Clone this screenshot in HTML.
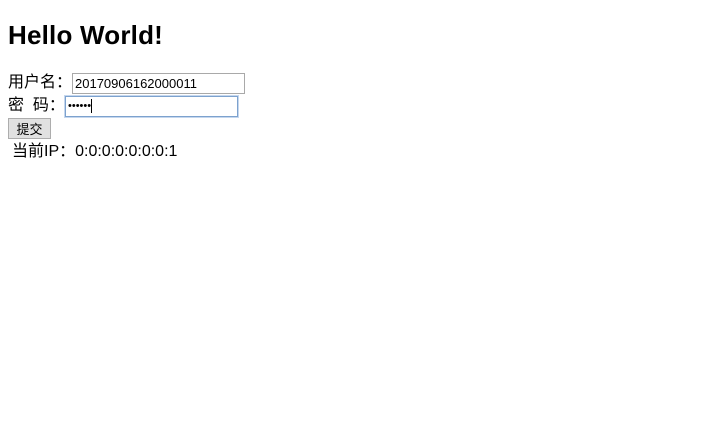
<!DOCTYPE html>
<html><head><style>
body{margin:0;background:#fff;font-family:"Liberation Sans","Noto Sans CJK SC",sans-serif;font-size:16px;color:#000;position:relative;width:704px;height:447px;overflow:hidden}
.a{position:absolute;white-space:nowrap}
h1{position:absolute;left:8px;top:20px;margin:0;font:bold 26px "Liberation Sans",sans-serif;letter-spacing:0.2px}
.in{position:absolute;border:1px solid #a9a9a9;background:#fff;font:13px "Liberation Sans",sans-serif;padding:0 2px;box-sizing:border-box;line-height:19px}
.c{margin-right:3px}
</style></head><body>
<h1>Hello World!</h1>
<div class="a" style="left:8px;top:73px;line-height:20px">用户名<span class="c">：</span></div>
<div class="in" style="left:72px;top:73px;width:173px;height:21px">20170906162000011</div>
<div class="a" style="left:8px;top:96px;line-height:20px">密&nbsp;&nbsp;码<span class="c">：</span></div>
<div class="in" style="left:65px;top:96px;width:173px;height:21px;border:1px solid #7da2ce;box-shadow:0 0 0 1px #c5d7ee;font-size:11px;line-height:19px">••••••<span style="display:inline-block;width:1px;height:14px;background:#000;vertical-align:middle"></span></div>
<div class="a" style="left:8px;top:118px;width:43px;height:21px;border:1px solid #adadad;background:#e1e1e1;box-sizing:border-box;font-size:13px;text-align:center;line-height:19px;font-family:'Noto Sans CJK SC',sans-serif">提交</div>
<div class="a" style="left:12px;top:142px;line-height:20px">当前IP：0:0:0:0:0:0:0:1</div>
</body></html>
